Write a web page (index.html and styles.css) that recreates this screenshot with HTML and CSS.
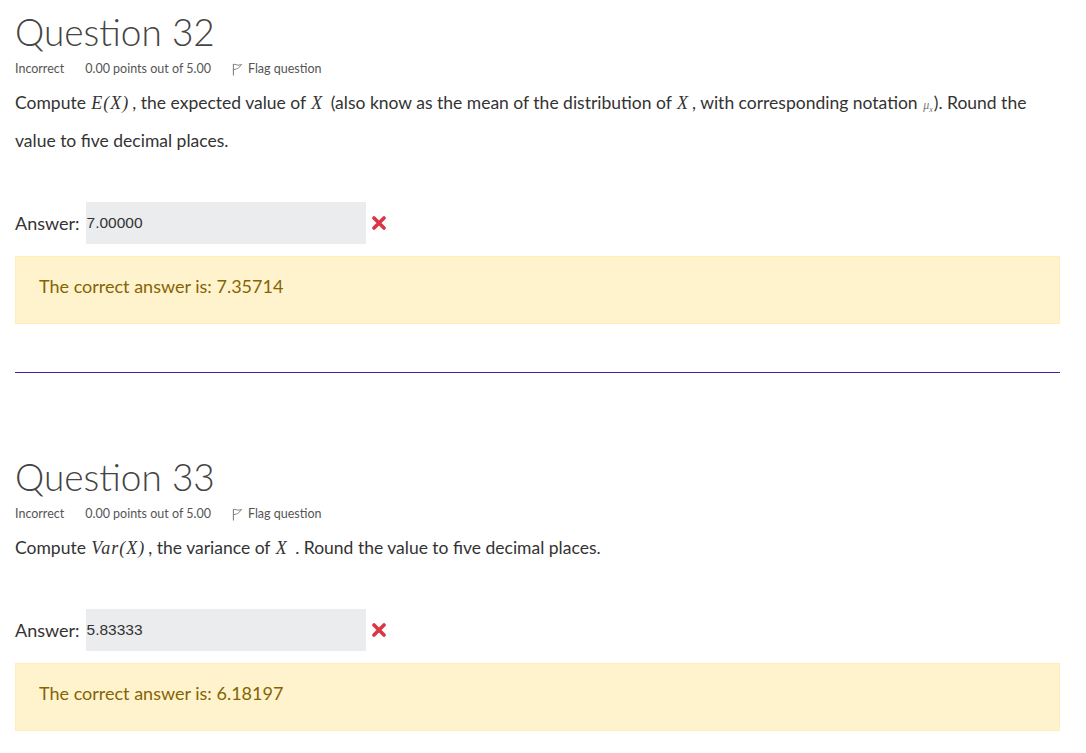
FILE: index.html
```html
<!DOCTYPE html>
<html lang="en">
<head>
    <meta charset="UTF-8">
    <title>Quiz review</title>
    <link rel="stylesheet" href="styles.css">
</head>
<body>
    <div class="que">
        <h2 class="que-title">Question 32</h2>
        <div class="que-info">
            <span class="state">Incorrect</span>
            <span class="grade">0.00 points out of 5.00</span>
            <span class="flag">
                <svg class="flag-icon" viewBox="0 0 12 14" width="11" height="13">
                    <path d="M1.5 1 L1.5 13.5" stroke="#777" stroke-width="1.1" fill="none"/>
                    <path d="M1.5 1.5 C4 0.6 5 2.8 7.5 2.2 C9 1.9 10 1.5 10.5 1.4 L7.2 5.2 C6 6.2 4.5 6.6 1.5 7.2" stroke="#777" stroke-width="1" fill="none"/>
                </svg>
                <span>Flag question</span>
            </span>
        </div>
        <p class="qtext">Compute <span class="mj">E(X)</span>, the expected value of <span class="mj">X</span> (also know as the mean of the distribution of <span class="mj">X</span>, with corresponding notation <span class="mj small">μ<sub>x</sub></span>). Round the <span>value to five decimal places.</span></p>
        <div class="answer-row">
            <span class="answer-label">Answer:</span>
            <span class="answer-box">7.00000</span>
            <svg class="wrong" viewBox="0 0 14 14" width="14" height="14">
                <path d="M2 2 L12 12 M12 2 L2 12" stroke="#dc3545" stroke-width="3.6" stroke-linecap="round"/>
            </svg>
        </div>
        <div class="feedback">The correct answer is: 7.35714</div>
    </div>

    <hr class="divider">

    <div class="que">
        <h2 class="que-title">Question 33</h2>
        <div class="que-info">
            <span class="state">Incorrect</span>
            <span class="grade">0.00 points out of 5.00</span>
            <span class="flag">
                <svg class="flag-icon" viewBox="0 0 12 14" width="11" height="13">
                    <path d="M1.5 1 L1.5 13.5" stroke="#777" stroke-width="1.1" fill="none"/>
                    <path d="M1.5 1.5 C4 0.6 5 2.8 7.5 2.2 C9 1.9 10 1.5 10.5 1.4 L7.2 5.2 C6 6.2 4.5 6.6 1.5 7.2" stroke="#777" stroke-width="1" fill="none"/>
                </svg>
                <span>Flag question</span>
            </span>
        </div>
        <p class="qtext">Compute <span class="mj">Var(X)</span>, the variance of <span class="mj">X</span> . Round the value to five decimal places.</p>
        <div class="answer-row">
            <span class="answer-label">Answer:</span>
            <span class="answer-box">5.83333</span>
            <svg class="wrong" viewBox="0 0 14 14" width="14" height="14">
                <path d="M2 2 L12 12 M12 2 L2 12" stroke="#dc3545" stroke-width="3.6" stroke-linecap="round"/>
            </svg>
        </div>
        <div class="feedback">The correct answer is: 6.18197</div>
    </div>
</body>
</html>
```

FILE: styles.css
```css
body {
    margin: 0;
    padding: 8px 26px 0 15px;
    font-family: Lato, "Open Sans", sans-serif;
    color: #333;
    background: #fff;
}
.que-title {
    margin: 0;
    font-family: Lato, sans-serif;
    font-weight: 300;
    font-size: 37px;
    line-height: 48px;
    color: #444;
}
.que-info {
    display: flex;
    align-items: center;
    gap: 21px;
    margin-top: 4px;
    font-size: 12.5px;
    color: #555;
    line-height: 18px;
}
.flag {
    display: flex;
    align-items: center;
    gap: 5px;
}
.qtext {
    margin: 6px 0 0;
    font-size: 17.5px;
    line-height: 38px;
}
.mj {
    display: inline-block;
    line-height: 20px;
    margin: 0 3px 0 1px;
    font-family: "Liberation Serif", serif;
    font-style: italic;
    font-size: 18px;
    letter-spacing: 1px;
    color: #333;
}
.mj.small {
    font-size: 12px;
    color: #777;
    margin: 0 1px;
    letter-spacing: 0;
}
.mj sub {
    font-size: 8px;
    line-height: 0;
}
.answer-row {
    display: flex;
    align-items: center;
    margin-top: 42px;
}
.answer-label {
    font-size: 18px;
    margin-right: 6px;
}
.answer-box {
    display: flex;
    align-items: center;
    width: 279px;
    height: 42px;
    padding-left: 1px;
    background: #ebecee;
    font-family: "Liberation Sans", Arial, sans-serif;
    font-size: 15.5px;
    color: #333;
}
.wrong {
    margin-left: 6px;
}
.feedback {
    margin-top: 12px;
    padding: 14px 23px 22px;
    line-height: 30px;
    font-size: 18px;
    color: #856404;
    background: #fff3cd;
    border: 1px solid #ffeeba;
}
.divider {
    margin: 48px 0 0;
    height: 0;
    border: none;
    border-top: 1px solid #4b2095;
}
.divider + .que {
    margin-top: 80px;
}
```
